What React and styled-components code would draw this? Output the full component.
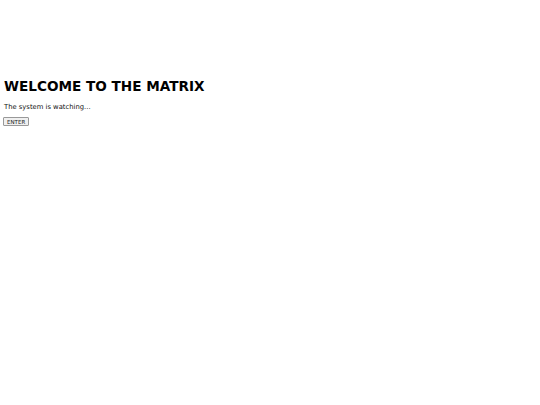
import React from "react";
import styled, { createGlobalStyle } from "styled-components";

const GlobalStyle = createGlobalStyle`
  body {
    margin: 0;
    background: #fff;
    font-family: "DejaVu Sans", Verdana, sans-serif;
    color: #000;
  }
`;

const Container = styled.div`
  padding: 78px 4px 0;
`;

const Title = styled.h1`
  font-size: 13.6px;
  font-weight: bold;
  margin: 0 0 8.5px;
`;

const Text = styled.p`
  font-size: 6.8px;
  color: #111;
  margin: 0 0 6.7px;
`;

const Button = styled.button`
  display: block;
  font-family: "DejaVu Sans", Verdana, sans-serif;
  font-size: 5.5px;
  line-height: 6px;
  padding: 0.5px 3px;
  margin-left: -1px;
  color: #222;
  background: #f0f0f0;
  border: 1px solid #999;
  border-radius: 1px;
`;

export default function App() {
  return (
    <>
      <GlobalStyle />
      <Container>
        <Title>WELCOME TO THE MATRIX</Title>
        <Text>The system is watching...</Text>
        <Button>ENTER</Button>
      </Container>
    </>
  );
}
